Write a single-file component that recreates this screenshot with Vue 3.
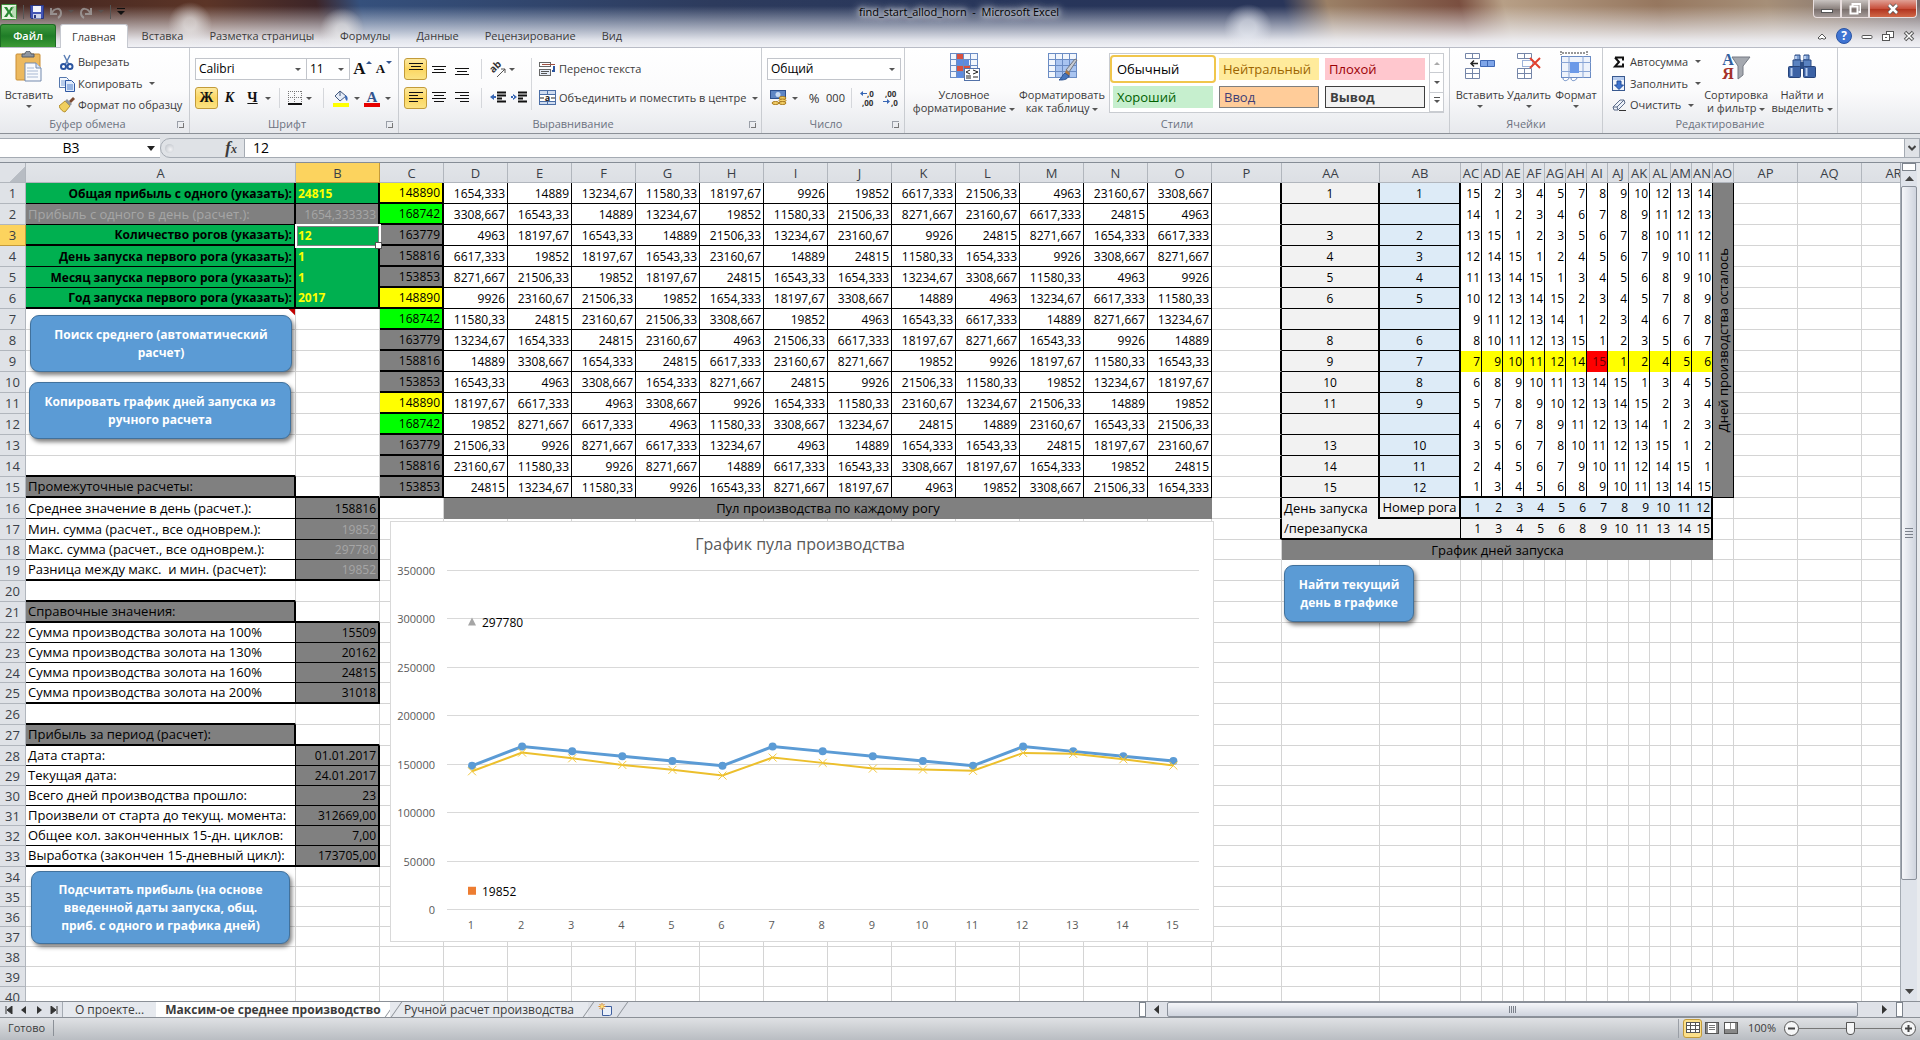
<script setup>
import { ref } from 'vue'

const columns = [
  { name: 'A', w: 270 }, { name: 'B', w: 84 }, { name: 'C', w: 64 },
  ...'DEFGHIJKLMNO'.split('').map((name) => ({ name, w: 64 })),
  { name: 'P', w: 70 }, { name: 'AA', w: 98 }, { name: 'AB', w: 81 },
  ...['AC', 'AD', 'AE', 'AF', 'AG', 'AH', 'AI', 'AJ', 'AK', 'AL', 'AM', 'AN', 'AO'].map((name) => ({ name, w: 21 })),
  { name: 'AP', w: 64 }, { name: 'AQ', w: 64 }, { name: 'AR', w: 64 },
]
const tableWidth = 26 + columns.reduce((sum, c) => sum + c.w, 0)
const shortRows = [18, 22, 23, 24, 28, 29, 30, 31, 32, 34, 35, 36, 37, 38, 39, 40]

const cells = {}
const covered = new Set()
const put = (key, t, c = '', extra = {}) => { cells[key] = { t, c, ...extra } }

// Input block
const inputs = [
  [1, 'Общая прибыль с одного (указать):', '24815'],
  [3, 'Количество рогов (указать):', '12'],
  [4, 'День запуска первого рога (указать):', '1'],
  [5, 'Месяц запуска первого рога (указать):', '1'],
  [6, 'Год запуска первого рога (указать):', '2017'],
]
for (const [r, label, value] of inputs) {
  put('A' + r, label, 'green bold right kb kr2')
  put('B' + r, value, 'green bold lemon kr2' + (r === 1 || r === 3 ? ' kb' : r === 6 ? ' kb2' : ' nb'))
}
cells.A6.c += ' kb2'
cells.A3.c += ' kb2'
put('A2', 'Прибыль с одного в день (расчет.):', 'grey faint text kb kr2')
put('B2', '1654,333333', 'grey faint right kb kr2')
put('A7', '', 'note')

// Summary blocks
const heading = (r, text) => {
  put('A' + (r - 1), '', 'kb2')
  put('A' + r, text, 'grey text kb2 kr2')
  put('B' + r, '', 'kb2')
}
const block = (from, items) => items.forEach(([label, value, faint], i) => {
  const last = i === items.length - 1 ? 'kb2' : 'kb'
  put('A' + (from + i), label, `text kr ${last}`)
  put('B' + (from + i), value, `grey right kr2 ${last}` + (faint ? ' faint' : ''))
})
heading(15, 'Промежуточные расчеты:')
block(16, [
  ['Среднее значение в день (расчет.):', '158816'],
  ['Мин. сумма (расчет., все одноврем.):', '19852', true],
  ['Макс. сумма (расчет., все одноврем.):', '297780', true],
  ['Разница между макс.  и мин. (расчет):', '19852', true],
])
heading(21, 'Справочные значения:')
block(22, [
  ['Сумма производства золота на 100%', '15509'],
  ['Сумма производства золота на 130%', '20162'],
  ['Сумма производства золота на 160%', '24815'],
  ['Сумма производства золота на 200%', '31018'],
])
heading(27, 'Прибыль за период (расчет):')
block(28, [
  ['Дата старта:', '01.01.2017'],
  ['Текущая дата:', '24.01.2017'],
  ['Всего дней производства прошло:', '23'],
  ['Произвели от старта до текущ. момента:', '312669,00'],
  ['Общее кол. законченных 15-дн. циклов:', '7,00'],
  ['Выработка (закончен 15-дневный цикл):', '173705,00'],
])

// Production pool
const dailyTotals = [148890, 168742, 163779, 158816, 153853]
const totalFill = ['yellow', 'lime', 'grey', 'grey', 'grey']
const poolStart = [1, 9, 8, 7, 11, 6, 12, 4, 13, 3, 14, 2]
const poolValue = (k) => {
  const v = (24815 * k) / 15
  return (k % 3 === 0 ? String(Math.round(v)) : v.toFixed(v < 10000 ? 3 : 2)).replace('.', ',')
}
// Days left per horn
const daysStart = [15, 2, 3, 4, 5, 7, 8, 9, 10, 12, 13, 14]
const launchDays = [1, 3, 4, 5, 6, 8, 9, 10, 11, 13, 14, 15]
for (let r = 1; r <= 15; r++) {
  put('C' + r, String(dailyTotals[(r - 1) % 5]), `${totalFill[(r - 1) % 5]} right kb2 kr2`)
  for (let i = 0; i < 12; i++) {
    put(columns[3 + i].name + r, poolValue(((poolStart[i] + r - 2) % 15) + 1), 'right kb kr')
    const days = ((daysStart[i] - r + 15) % 15) + 1
    let fill = ''
    if (r === 9) fill = days === 15 ? ' red' : ' yellow'
    put(columns[18 + i].name + r, String(days), 'right days kr' + (r === 15 ? ' kb2' : ' nb') + fill)
  }
  const horn = launchDays.indexOf(r)
  put('AA' + r, horn < 0 ? '' : String(r), 'pale center kb kr2')
  put('AB' + r, horn < 0 ? '' : String(horn + 1), 'sky center kb kr2')
  if (r > 1) covered.add('AO' + r)
  put('P' + r, '', 'kr2')
}
put('P16', '', 'kr2')
put('P17', '', 'kr2')
put('AO1', 'Дней производства осталось', 'grey upright kb kr', { rows: 15 })
put('D16', 'Пул производства по каждому рогу', 'grey center text nb nr', { cols: 12 })
columns.slice(4, 15).forEach((c) => covered.add(c.name + 16))
put('AA16', 'День запуска', 'pale text nb kr2')
put('AB16', 'Номер рога', 'pale center text kb2 kr2')
put('AA17', '/перезапуска', 'pale text nr kb2')
put('AB17', '', 'pale kb2 kr')
for (let i = 0; i < 12; i++) {
  const edge = i === 11 ? ' kr2' : ' nr'
  put(columns[18 + i].name + 16, String(i + 1), 'sky right days kb2' + edge)
  put(columns[18 + i].name + 17, String(launchDays[i]), 'pale right days kb2' + edge)
}
put('AA18', 'График дней запуска', 'grey center text nb nr', { cols: 14 })
columns.slice(17, 30).forEach((c) => covered.add(c.name + 18))

const rows = Array.from({ length: 40 }, (_, i) => {
  const r = i + 1
  return {
    r,
    cells: columns.filter((c) => !covered.has(c.name + r)).map((c) => ({ key: c.name + r, t: '', c: '', ...cells[c.name + r] })),
  }
})

// Chart
const px = (i) => 82 + i * 50.1
const py = (v) => 389 - (v * 339) / 350000
const blue = Array.from({ length: 15 }, (_, i) => dailyTotals[i % 5])
const gold = [143200, 162500, 156600, 149800, 144700, 138800, 157400, 151900, 146000, 145000, 143700, 162200, 161200, 155600, 149100]
const line = (data) => data.map((v, i) => `${px(i)},${py(v)}`).join(' ')
const ticks = [350000, 300000, 250000, 200000, 150000, 100000, 50000, 0]

const ribbonTabs = ['Вставка', 'Разметка страницы', 'Формулы', 'Данные', 'Рецензирование', 'Вид']
const nameBox = ref('B3')
const formula = ref('12')
const zoom = ref(50)
</script>

<template>
  <div class="app">
    <header class="title">
      <div class="quick">
        <svg width="16" height="16" viewBox="0 0 16 16"><rect x="0.5" y="0.5" width="15" height="15" rx="1" fill="#e9f5e4" stroke="#3c8d3a" /><path d="M3 3h3l2 3.500 2-3.500h3l-3.500 5 3.500 5h-3l-2-3.500-2 3.500h-3l3.500-5z" fill="#2b8a35" /><path d="M12 2v12M14 2v12" stroke="#8cc58a" /></svg>
        <i class="vbar"></i>
        <button class="flat" aria-label="Сохранить"><svg width="14" height="14" viewBox="0 0 14 14"><path d="M0.500 0.500h13v13h-12l-1-1z" fill="#4355b5" stroke="#2a3780" /><rect x="3" y="1" width="8" height="6" fill="#f3f5fb" /><rect x="3" y="9" width="8" height="4.500" fill="#cdd3ea" /><rect x="4" y="10" width="2" height="3" fill="#2a3780" /></svg></button>
        <svg class="dim" width="24" height="14" viewBox="0 0 24 14"><path d="M1 3v6h6M2 8c2-5 9-6 9 0 0 2-1 4-3 5" fill="none" stroke="#aaa" stroke-width="2" /><path d="M18 5h6l-3 3z" fill="#555" /></svg>
        <svg class="dim" width="24" height="14" viewBox="0 0 24 14"><path d="M11 3v6h-6M10 8c-2-5-9-6-9 0 0 2 1 4 3 5" fill="none" stroke="#aaa" stroke-width="2" /><path d="M18 5h6l-3 3z" fill="#555" /></svg>
        <i class="vbar"></i>
        <svg width="8" height="8" viewBox="0 0 8 8"><path d="M0 0h8v1h-8zM0 3h8l-4 4z" fill="#111" /></svg>
      </div>
      <h1>find_start_allod_horn&nbsp; -&nbsp; Microsoft Excel</h1>
      <div class="winbtns">
        <button aria-label="Свернуть"><svg width="12" height="12" viewBox="0 0 12 12"><rect x="0.500" y="6.500" width="11" height="3" fill="#fff" stroke="#555" /></svg></button>
        <button aria-label="Развернуть"><svg width="12" height="12" viewBox="0 0 12 12"><path d="M3.500 3V1h8v8h-2" fill="none" stroke="#fff" stroke-width="2" /><rect x="1.500" y="3.500" width="7" height="7" fill="none" stroke="#fff" stroke-width="2" /></svg></button>
        <button class="close" aria-label="Закрыть"><svg width="12" height="12" viewBox="0 0 12 12"><path d="M2 2l8 8M10 2l-8 8" stroke="#555" stroke-width="4" /><path d="M2 2l8 8M10 2l-8 8" stroke="#fff" stroke-width="2.500" /></svg></button>
      </div>
    </header>

    <nav class="tabs">
      <button class="file">Файл</button>
      <button class="tab active">Главная</button>
      <button v-for="t in ribbonTabs" :key="t" class="tab">{{ t }}</button>
      <div class="docbtns">
        <svg width="10" height="8" viewBox="0 0 10 8"><path d="M1 6l4-4 4 4-1 1h-2l-1-1-1 1h-2z" fill="#fff" stroke="#555" /></svg>
        <svg width="16" height="16" viewBox="0 0 16 16"><circle cx="8" cy="8" r="7.500" fill="#3f74d2" stroke="#2a55a5" /><text x="8" y="12" text-anchor="middle" font-size="12" font-weight="700" fill="#fff">?</text></svg>
        <svg width="12" height="12" viewBox="0 0 12 12"><rect x="1" y="5.500" width="10" height="3" rx="1" fill="#fff" stroke="#555" /></svg>
        <svg width="12" height="12" viewBox="0 0 12 12"><rect x="4.500" y="1.500" width="7" height="6" fill="#fff" stroke="#555" /><rect x="0.500" y="4.500" width="7" height="6" fill="#fff" stroke="#555" /><rect x="3" y="7" width="2" height="1" fill="#555" /></svg>
        <svg width="12" height="12" viewBox="0 0 12 12"><path d="M2 2l8 8M10 2l-8 8" stroke="#555" stroke-width="3.500" /><path d="M2.500 2.500l7 7M9.500 2.500l-7 7" stroke="#fff" stroke-width="1.500" /></svg>
      </div>
    </nav>

    <div class="ribbon">
      <section class="group clip">
        <div class="body">
          <button class="big">
            <svg width="28" height="32" viewBox="0 0 28 32"><rect x="1" y="3" width="24" height="26" rx="1" fill="#ecb95f" stroke="#c98e36" /><path d="M7 6V3h3c0-4 6-4 6 0h3v3z" fill="#8e959f" stroke="#555d68" /><path d="M10 12h11l5 5v13h-16z" fill="#f8fafd" stroke="#7389ad" /><path d="M21 12v5h5" fill="#dce5f3" stroke="#7389ad" /><path d="M12 17h7M12 20h11M12 23h11M12 26h11" stroke="#a7b8d3" /></svg>
            <span>Вставить</span><i class="car"></i>
          </button>
          <div class="stack">
            <button class="row"><svg width="16" height="16" viewBox="0 0 16 16"><path d="M5 1l5 10M11 1l-5 10" stroke="#5b7fb5" stroke-width="1.500" /><circle cx="4.500" cy="12.500" r="2.500" fill="none" stroke="#2b55a0" stroke-width="2" /><circle cx="11" cy="12.500" r="2.500" fill="none" stroke="#2b55a0" stroke-width="2" /></svg>Вырезать</button>
            <button class="row"><svg width="16" height="16" viewBox="0 0 16 16"><path d="M0.500 1.500h7l2 2v8h-9z" fill="#f4f8fd" stroke="#5577ad" /><path d="M2 5h5M2 7h5M2 9h5" stroke="#7ea2d8" /><path d="M6.500 4.500h6l3 3v8h-9z" fill="#dfeafa" stroke="#2f58a3" /><path d="M8 9h6M8 11h6M8 13h6" stroke="#4f7fca" /></svg>Копировать<i class="car"></i></button>
            <button class="row"><svg width="16" height="16" viewBox="0 0 16 16"><path d="M0 9l6-5 5 5-5 6c-2 0-5-3-6-6z" fill="#f0cf5e" stroke="#b5902c" /><path d="M6 4l2-2 5 5-2 2z" fill="#8f959c" /><path d="M10 4l4-4 2 2-4 4z" fill="#7b4a30" /></svg>Формат по образцу</button>
          </div>
        </div>
        <footer>Буфер обмена<i class="launch"></i></footer>
      </section>

      <section class="group font">
        <div class="body col">
          <div class="line">
            <label class="sel w112"><select aria-label="Шрифт"><option>Calibri</option></select><i class="car"></i></label>
            <label class="sel w43"><select aria-label="Размер"><option>11</option></select><i class="car"></i></label>
            <button class="sm serif big-a">A<i class="tip"></i></button>
            <button class="sm serif small-a">A<i class="tip down"></i></button>
          </div>
          <div class="line">
            <button class="sm serif on">Ж</button>
            <button class="sm serif"><i>К</i></button>
            <button class="sm serif"><u>Ч</u></button><i class="car"></i>
            <i class="sep"></i>
            <svg width="14" height="14" viewBox="0 0 14 14"><path d="M0 0.500h14M0 6.500h14M0.500 0v14M6.500 0v14M13.500 0v14" stroke="#777" stroke-dasharray="1 1" /><path d="M0 13h14" stroke="#111" stroke-width="2" /></svg><i class="car"></i>
            <i class="sep"></i>
            <svg width="18" height="18" viewBox="0 0 18 18"><path d="M3 7l5-5 6 5-6 5z" fill="#e5ecf7" stroke="#44597e" /><path d="M8 2v5" stroke="#44597e" /><path d="M13 6c3 1 3 4 2 6-2-1-2-4-2-6" fill="#3867b5" /><rect x="1" y="14" width="16" height="4" fill="#ffff00" /></svg><i class="car"></i>
            <svg width="18" height="18" viewBox="0 0 18 18"><text x="9" y="13" text-anchor="middle" font-size="15" font-weight="700" fill="#33558f" class="serif">A</text><rect x="1" y="14" width="16" height="4" fill="#e60000" /></svg><i class="car"></i>
          </div>
        </div>
        <footer>Шрифт<i class="launch"></i></footer>
      </section>

      <section class="group align">
        <div class="body">
          <div class="col">
            <div class="line">
              <button class="sm on"><svg width="14" height="14" viewBox="0 0 14 14"><path d="M0 1.500h14M2 4.500h10M0 7.500h14" stroke="#111" /></svg></button>
              <button class="sm"><svg width="14" height="14" viewBox="0 0 14 14"><path d="M0 4.500h14M2 7.500h10M0 10.500h14" stroke="#111" /></svg></button>
              <button class="sm"><svg width="14" height="14" viewBox="0 0 14 14"><path d="M0 6.500h14M2 9.500h10M0 12.500h14" stroke="#111" /></svg></button>
              <i class="sep"></i>
              <svg width="16" height="16" viewBox="0 0 16 16"><text x="1" y="11" transform="rotate(-45 4 9)" font-size="10" font-weight="700" fill="#333">ab</text><path d="M7 16l8-8M15 12V8h-4" fill="none" stroke="#555" /></svg><i class="car"></i>
            </div>
            <div class="line">
              <button class="sm on"><svg width="14" height="14" viewBox="0 0 14 14"><path d="M0 1.500h14M0 4.500h9M0 7.500h14M0 10.500h9" stroke="#111" /></svg></button>
              <button class="sm"><svg width="14" height="14" viewBox="0 0 14 14"><path d="M0 1.500h14M2 4.500h10M0 7.500h14M2 10.500h10" stroke="#111" /></svg></button>
              <button class="sm"><svg width="14" height="14" viewBox="0 0 14 14"><path d="M0 1.500h14M5 4.500h9M0 7.500h14M5 10.500h9" stroke="#111" /></svg></button>
              <i class="sep"></i>
              <svg width="16" height="14" viewBox="0 0 16 14"><path d="M7 1.500h9M7 4.500h9M7 7.500h5M7 10.500h9" stroke="#111" stroke-width="2" /><path d="M0 6l4-3v6zM3 5h3v2h-3z" fill="#3867b5" /></svg>
              <svg class="ml" width="16" height="14" viewBox="0 0 16 14"><path d="M7 1.500h9M7 4.500h9M7 7.500h5M7 10.500h9" stroke="#111" stroke-width="2" /><path d="M6 6l-4-3v6zM0 5h3v2h-3z" fill="#3867b5" /></svg>
            </div>
          </div>
          <i class="tall"></i>
          <div class="col">
            <div class="line"><button class="row"><svg width="17" height="16" viewBox="0 0 17 16"><rect x="0.500" y="1.500" width="11" height="4" fill="#fff" stroke="#666" /><path d="M3 3.500h13" stroke="#a05040" /><rect x="0.500" y="8.500" width="11" height="6" fill="#e5ecf7" stroke="#666" /><path d="M2 10.500h8M2 12.500h6" stroke="#555" /><path d="M15 5v5h-2" fill="none" stroke="#2b55a0" stroke-width="2" /></svg>Перенос текста</button></div>
            <div class="line"><button class="row"><svg width="17" height="16" viewBox="0 0 17 16"><rect x="0.500" y="0.500" width="16" height="14" fill="#cfdcf0" stroke="#4b6ea5" /><path d="M0 4.500h17M0 11.500h17M8.500 0v4M8.500 12v3" stroke="#4b6ea5" /><rect x="1" y="5" width="15" height="6" fill="#fff" /><text x="8.500" y="11" text-anchor="middle" font-size="9" font-weight="700" fill="#222">a</text><path d="M1 8h4M12 8h4" stroke="#222" /></svg>Объединить и поместить в центре<i class="car"></i></button></div>
          </div>
        </div>
        <footer>Выравнивание<i class="launch"></i></footer>
      </section>

      <section class="group number">
        <div class="body col">
          <div class="line"><label class="sel w134"><select aria-label="Формат"><option>Общий</option></select><i class="car"></i></label></div>
          <div class="line">
            <svg class="coins" width="17" height="16" viewBox="0 0 17 16"><rect x="0.500" y="0.500" width="15" height="8" fill="#5f86c4" stroke="#2d4f8d" /><circle cx="8" cy="4.500" r="2.500" fill="#c7d9f3" /><ellipse cx="12.500" cy="8" rx="3.500" ry="1.500" fill="#f3cf68" stroke="#a97a1d" /><ellipse cx="12.500" cy="10.500" rx="3.500" ry="1.500" fill="#f3cf68" stroke="#a97a1d" /><ellipse cx="12.500" cy="13" rx="3.500" ry="1.500" fill="#f3cf68" stroke="#a97a1d" /><ellipse cx="5.500" cy="13" rx="3.500" ry="1.500" fill="#f3cf68" stroke="#a97a1d" /></svg><i class="car"></i>
            <button class="sm pct">%</button>
            <button class="sm zeros">000</button>
            <i class="sep"></i>
            <svg width="18" height="18" viewBox="0 0 18 18" font-size="8" font-weight="700" fill="#333"><text x="7" y="8">,0</text><text x="2" y="17">,00</text><path d="M0 4.500l3-2.500v5zM3 4h4v1h-4z" fill="#3867b5" /></svg>
            <svg class="ml" width="18" height="18" viewBox="0 0 18 18" font-size="8" font-weight="700" fill="#333"><text x="2" y="8">,00</text><text x="8" y="17">,0</text><path d="M7 12.500l-3-2.500v5zM0 12h4v1h-4z" fill="#3867b5" /></svg>
          </div>
        </div>
        <footer>Число<i class="launch"></i></footer>
      </section>

      <section class="group styles">
        <div class="body">
          <button class="big cond">
            <svg width="32" height="32" viewBox="0 0 32 32"><rect x="2.500" y="2.500" width="27" height="24" fill="#f2f6fc" stroke="#6b8cc4" /><rect x="9" y="3" width="7" height="6" fill="#d9503f" /><rect x="9" y="9" width="12" height="6" fill="#5d8be0" /><rect x="9" y="15" width="14" height="6" fill="#d9503f" /><rect x="9" y="21" width="7" height="6" fill="#5d8be0" /><path d="M2 8.500h28M2 14.500h28M2 20.500h28M8.500 2v25M15.500 2v25M22.500 2v25" stroke="#6b8cc4" /><rect x="16.500" y="17.500" width="15" height="12" fill="#fff" stroke="#5271a8" /><path d="M22 19l-4 2 4 2M18 25h5M18 27h5M25 19l5 2-5 2M25 26h5" fill="none" stroke="#222" /></svg>
            <span>Условное</span><span>форматирование <i class="car"></i></span>
          </button>
          <button class="big fmt">
            <svg width="32" height="32" viewBox="0 0 32 32"><rect x="2.500" y="2.500" width="28" height="24" fill="#f2f6fc" stroke="#6b8cc4" /><rect x="9" y="9" width="21" height="17" fill="#a9c4f0" /><path d="M2 8.500h28M2 14.500h28M2 20.500h28M9.500 2v25M16.500 2v25M23.500 2v25" stroke="#6b8cc4" /><path d="M31 9l-8 12-3-2 9-11z" fill="#c9ccd2" stroke="#6f7580" /><path d="M20 19l4 3-1 3-4-3z" fill="#b07840" /><path d="M19 22l4 3c-2 4-6 4-10 4 3-2 3-5 6-7z" fill="#4776bd" stroke="#2c5290" /></svg>
            <span>Форматировать</span><span>как таблицу <i class="car"></i></span>
          </button>
          <div class="gallery">
            <div class="swatches">
              <button class="st chosen">Обычный</button><button class="st neutral">Нейтральный</button><button class="st bad">Плохой</button>
              <button class="st good">Хороший</button><button class="st entry">Ввод</button><button class="st output">Вывод</button>
            </div>
            <div class="spin"><span class="off"><i class="car up"></i></span><span><i class="car"></i></span><span class="more"><i class="car"></i></span></div>
          </div>
        </div>
        <footer class="st-foot">Стили</footer>
      </section>

      <section class="group cellsg">
        <div class="body">
          <button class="big c1"><svg width="32" height="32" viewBox="0 0 32 32"><path d="M1.500 2.500h14v5h-14zM8.500 2v6M1.500 17.500h14v10h-14zM8.500 17v11M1 22.500h15" fill="#fff" stroke="#7485a8" /><path d="M16.500 9.500h14v6h-14zM23.500 9v7" fill="#7ea5e8" stroke="#3f68b5" /><path d="M7 12.500h7M10 9.500l-3 3 3 3" fill="none" stroke="#222" stroke-width="1.500" /></svg><span>Вставить</span><i class="car"></i></button>
          <button class="big c2"><svg width="32" height="32" viewBox="0 0 32 32"><path d="M4.500 2.500h14v5h-14zM11.500 2v6M4.500 17.500h14v10h-14zM11.500 17v11M4 22.500h15" fill="#fff" stroke="#7485a8" /><path d="M9.500 9.500h10v6h-10z" fill="none" stroke="#3f68b5" stroke-dasharray="1 1" /><path d="M17 7l10 10M27 7l-10 10" stroke="#e0402f" stroke-width="2" /></svg><span>Удалить</span><i class="car"></i></button>
          <button class="big c3"><svg width="32" height="32" viewBox="0 0 32 32"><path d="M1 0v4M27 0v4M2 2h24" stroke="#333" stroke-dasharray="2 1" /><rect x="1.500" y="5.500" width="29" height="21" fill="#eef3fb" stroke="#6b8cc4" /><path d="M9 5v22M23 5v22M1 11.500h30M1 20.500h30" stroke="#8aa6d6" /><rect x="10" y="11" width="9" height="11" fill="#6c9ae8" /><path d="M3 27c0 4 5 3 6 0M11 27c0 4 5 3 6 0" fill="#fff" stroke="#6b8cc4" /></svg><span>Формат</span><i class="car"></i></button>
        </div>
        <footer>Ячейки</footer>
      </section>

      <section class="group edit">
        <div class="body">
          <div class="stack">
            <button class="row"><svg width="14" height="16" viewBox="0 0 14 16"><path d="M3 3.500h8v3M3 3.500l4 4.500-4 4.500h8v-3" fill="none" stroke="#111" stroke-width="2" /></svg>Автосумма<i class="car"></i></button>
            <button class="row"><svg width="14" height="16" viewBox="0 0 14 16"><rect x="0.500" y="0.500" width="12" height="14" fill="#f2f6fc" stroke="#39598f" /><rect x="1" y="1" width="11" height="3" fill="#b8cdef" /><path d="M5 5h4v4h2.500l-4.500 4.500-4.500-4.500H5z" fill="#3d73cf" stroke="#254f9a" /></svg>Заполнить<i class="car"></i></button>
            <button class="row"><svg width="14" height="16" viewBox="0 0 14 16"><path d="M1 10l7-7h4l1 3-7 7h-4z" fill="#eef2f9" stroke="#5c6c8a" /><path d="M1 10h4l1 3M5 10l7-7" fill="none" stroke="#5c6c8a" /><path d="M7 13.500h7" stroke="#333" /></svg>Очистить<i class="car"></i></button>
          </div>
          <button class="big e1"><svg width="32" height="32" viewBox="0 0 32 32"><path d="M12 6h18l-7 9v9l-5 4v-13z" fill="#a5a9b0" stroke="#767b84" /><text x="8" y="14" text-anchor="middle" font-size="16" font-weight="700" fill="#33609f" class="serif">А</text><text x="8" y="28" text-anchor="middle" font-size="16" font-weight="700" fill="#a5312a" class="serif">Я</text></svg><span>Сортировка</span><span>и фильтр <i class="car"></i></span></button>
          <button class="big e2"><svg width="32" height="32" viewBox="0 0 32 32"><path d="M9 4h5v5h-5zM18 4h5v5h-5z" fill="#7d9fd2" stroke="#2f4f87" /><path d="M7 9h8v7h-8zM17 9h8v7h-8z" fill="#5a82c0" stroke="#2f4f87" /><rect x="14" y="11" width="4" height="7" fill="#2f4f87" /><rect x="2.500" y="15.500" width="12" height="11" rx="1" fill="#3c62a5" stroke="#27447a" /><rect x="17.500" y="15.500" width="12" height="11" rx="1" fill="#3c62a5" stroke="#27447a" /><path d="M5.500 17v8M20.500 17v8M10 5v3M19 5v3" stroke="#b7cdf0" stroke-width="2" /></svg><span>Найти и</span><span>выделить <i class="car"></i></span></button>
        </div>
        <footer>Редактирование</footer>
      </section>
      <div class="rest"></div>
    </div>

    <div class="fbar">
      <input v-model="nameBox" class="namebox" aria-label="Имя ячейки" />
      <span class="nbcar"><svg width="8" height="5" viewBox="0 0 8 5"><path d="M0 0h8l-4 5z" fill="#222" /></svg></span>
      <div class="fx"><i class="knob"></i><span class="serif">f<small>x</small></span></div>
      <input v-model="formula" class="formula" aria-label="Строка формул" />
      <button class="expand" aria-label="Развернуть строку формул"><svg width="8" height="6" viewBox="0 0 8 6"><path d="M0.500 1l3.500 3.500L7.500 1" fill="none" stroke="#444" stroke-width="2" /></svg></button>
    </div>

    <main class="sheetwrap">
      <div class="sheet">
        <table :style="{ width: tableWidth + 'px' }">
          <colgroup><col class="rowcol" /><col v-for="c in columns" :key="c.name" :style="{ width: c.w + 'px' }" /></colgroup>
          <thead>
            <tr><th class="corner"></th><th v-for="c in columns" :key="c.name" :class="{ hot: c.name === 'B' }">{{ c.name }}</th></tr>
          </thead>
          <tbody>
            <tr v-for="row in rows" :key="row.r" :class="{ short: shortRows.includes(row.r) }">
              <th :class="{ hot: row.r === 3 }">{{ row.r }}</th>
              <td v-for="cell in row.cells" :key="cell.key" :class="cell.c" :colspan="cell.cols" :rowspan="cell.rows"><span v-if="cell.rows" class="turn">{{ cell.t }}</span><template v-else>{{ cell.t }}</template></td>
            </tr>
          </tbody>
        </table>
        <div class="cursor"></div>
        <button class="shape s1">Поиск среднего (автоматический расчет)</button>
        <button class="shape s2">Копировать график дней запуска из ручного расчета</button>
        <button class="shape s3">Подсчитать прибыль (на основе введенной даты запуска, общ. приб. с одного и графика дней)</button>
        <button class="shape s4">Найти текущий день в графике</button>
        <svg class="chart" width="824" height="421" viewBox="0 0 824 421">
          <rect x="0.500" y="0.500" width="823" height="420" fill="#fff" stroke="#d9d9d9" />
          <text x="410" y="29" text-anchor="middle" class="ctitle">График пула производства</text>
          <g v-for="v in ticks" :key="v">
            <path :d="`M57 ${Math.round(py(v)) - 0.5}H809`" stroke="#d9d9d9" />
            <text x="45" :y="Math.round(py(v)) + 4" text-anchor="end" class="tick">{{ v }}</text>
          </g>
          <text v-for="i in 15" :key="i" :x="px(i - 1) - 1" y="408" text-anchor="middle" class="tick">{{ i }}</text>
          <polyline :points="line(blue)" fill="none" stroke="#5b9bd5" stroke-width="3" />
          <circle v-for="(v, i) in blue" :key="'b' + i" :cx="px(i)" :cy="py(v)" r="4" fill="#5b9bd5" />
          <polyline :points="line(gold)" fill="none" stroke="#ecbf2c" stroke-width="2" />
          <path v-for="(v, i) in gold" :key="'g' + i" :d="`M${px(i) - 4} ${py(v) - 4}l8 8m0 -8l-8 8`" stroke="#f3c93f" />
          <path :d="`M${px(0)} ${py(297780) - 4}l4 8h-8z`" fill="#a5a5a5" />
          <rect :x="px(0) - 4" :y="py(19852) - 4" width="8" height="8" fill="#ed7d31" />
          <text x="92" :y="py(297780) + 5" class="dlabel">297780</text>
          <text x="92" :y="py(19852) + 5" class="dlabel">19852</text>
        </svg>
      </div>
      <div class="vscroll">
        <i class="split"></i>
        <svg width="9" height="5" viewBox="0 0 9 5"><path d="M0 5h9L4.500 0z" fill="#444" /></svg>
        <div class="track"><div class="thumb"><i></i><i></i><i></i><i></i></div></div>
        <svg width="9" height="5" viewBox="0 0 9 5"><path d="M0 0h9L4.500 5z" fill="#444" /></svg>
      </div>
    </main>

    <div class="bottom">
      <div class="navs">
        <svg width="8" height="8" viewBox="0 0 8 8"><path d="M1 0v8M7 0v8L2 4z" stroke="#333" fill="#333" stroke-width="1" /></svg>
        <svg width="8" height="8" viewBox="0 0 8 8"><path d="M6 0v8L1 4z" fill="#333" /></svg>
        <svg width="8" height="8" viewBox="0 0 8 8"><path d="M2 0v8l5-4z" fill="#333" /></svg>
        <svg width="8" height="8" viewBox="0 0 8 8"><path d="M7 0v8M1 0v8l5-4z" stroke="#333" fill="#333" stroke-width="1" /></svg>
      </div>
      <button class="stab t1">О проекте...</button>
      <button class="stab t2">Максим-ое среднее производство</button>
      <button class="stab t3">Ручной расчет производства</button>
      <button class="stab t4" aria-label="Вставить лист"><svg width="15" height="13" viewBox="0 0 15 13"><path d="M4.500 3.500h9v8l-2 1h-7z" fill="#eaf0fa" stroke="#3f5f9f" /><path d="M4 0v7M0.500 3.500h7M1.500 1l5 5M6.500 1l-5 5" stroke="#e08a1e" /><circle cx="4" cy="3.500" r="1.500" fill="#ffe27a" /></svg></button>
      <div class="hgap"></div>
      <i class="hsplit"></i>
      <svg class="ha" width="5" height="9" viewBox="0 0 5 9"><path d="M5 0v9L0 4.500z" fill="#333" /></svg>
      <div class="hthumb"><i></i><i></i><i></i><i></i></div>
      <svg class="hb" width="5" height="9" viewBox="0 0 5 9"><path d="M0 0v9l5-4.500z" fill="#333" /></svg>
      <i class="hsplit"></i>
      <div class="hend"></div>
    </div>

    <div class="status">
      <span class="ready">Готово</span>
      <div class="views">
        <button class="view on" aria-label="Обычный"><svg width="14" height="12" viewBox="0 0 14 12"><rect x="0.500" y="0.500" width="13" height="10" fill="#fff" stroke="#555" /><path d="M0 3.500h14M0 7.500h14M4.500 0v11M9.500 0v11" stroke="#555" /></svg></button>
        <button class="view" aria-label="Разметка страницы"><svg width="14" height="12" viewBox="0 0 14 12"><rect x="0.500" y="0.500" width="13" height="11" fill="#888" stroke="#555" /><rect x="3" y="1" width="8" height="10" fill="#fff" /><path d="M4 3.500h6M4 5.500h6M4 7.500h6" stroke="#777" /></svg></button>
        <button class="view" aria-label="Страничный режим"><svg width="14" height="12" viewBox="0 0 14 12"><rect x="0.500" y="0.500" width="13" height="11" fill="#888" stroke="#555" /><path d="M1 1h5v6h-5zM7 1h4v6h-4z" fill="#fff" /></svg></button>
      </div>
      <label for="zoom">100%</label>
      <button class="round" aria-label="Уменьшить"><svg width="9" height="9" viewBox="0 0 9 9"><path d="M1 4.500h7" stroke="#444" stroke-width="2" /></svg></button>
      <input id="zoom" v-model="zoom" type="range" min="0" max="100" />
      <button class="round" aria-label="Увеличить"><svg width="9" height="9" viewBox="0 0 9 9"><path d="M1 4.500h7M4.500 1v7" stroke="#444" stroke-width="2" /></svg></button>
    </div>
  </div>
</template>

<style>
body { margin: 0; overflow: hidden; }
</style>

<style scoped>
* { box-sizing: border-box; }
.app { display: flex; flex-direction: column; height: 100vh; font: 11px/16px "Open Sans", "Noto Sans", sans-serif; color: #3b3b3b; background: radial-gradient(circle at 190px 24px, rgba(240, 240, 240, .6) 6px, transparent 22px), radial-gradient(circle at 342px 30px, rgba(240, 240, 240, .6) 6px, transparent 22px), radial-gradient(circle at 65% 28px, rgba(235, 238, 245, .6) 8px, transparent 24px), linear-gradient(180deg, transparent 0, transparent 6px, rgba(236, 238, 244, .5) 24px, rgba(240, 241, 246, .92) 40px, #f2f3f7 48px), linear-gradient(75deg, #cfcccc 0, #a89a99 5%, #402522 9%, #4a2a22 16%, #5c3527 22%, #3d2528 27%, #35507c 29%, #2d3b5d 45%, #27355a 60%, #293559 71%, #9b8066 73%, #7a4f40 79%, #b79f86 81%, #96775f 88%, #a68f78 93%, #74686a 100%); }
button { font: inherit; color: inherit; background: none; border: 0; padding: 0; margin: 0; white-space: nowrap; }
svg { display: block; flex: none; }
.serif { font-family: "Liberation Serif", serif; }

.title { display: flex; align-items: flex-start; height: 24px; flex: none; }
.quick { display: flex; align-items: center; gap: 6px; flex: 1 1 0; height: 24px; padding-left: 1px; }
.vbar { width: 1px; height: 14px; background: #555; }
.dim { opacity: .7; }
h1 { margin: 4px 0 0; font: inherit; font-size: 11px; color: #000; text-shadow: 0 0 5px #fff, 0 0 8px #fff, 0 0 12px #fff; }
.winbtns { flex: 1 1 0; display: flex; justify-content: flex-end; padding-right: 3px; }
.winbtns button { display: grid; place-items: center; width: 28px; height: 18px; border: 1px solid #e8dede; border-top: 0; background: linear-gradient(#c9c3c0, #8d8480 50%, #776c69 51%, #a49a98); }
.winbtns button:first-child { border-radius: 0 0 0 4px; }
.winbtns .close { width: 48px; border-radius: 0 0 4px 0; background: linear-gradient(#e0a095, #c8503c 50%, #b0301c 51%, #d06848); }

.tabs { display: flex; height: 24px; align-items: flex-end; border-bottom: 1px solid #b9bcc6; flex: none; }
.tab, .file { height: 23px; padding: 0 13px; }
.tab.active { height: 24px; margin: 0 1px -1px 4px; padding: 0 11px; background: #fff; border: 1px solid #c6c9d0; border-bottom: 0; border-radius: 3px 3px 0 0; }
.file { width: 56px; padding: 0; color: #fff; font-weight: 600; background: linear-gradient(#3f9a3f, #1f7d27 50%, #3d9a35); border: 1px solid #1c6b22; border-bottom: 0; border-radius: 3px 3px 0 0; }
.docbtns { display: flex; align-items: center; gap: 9px; margin-left: auto; height: 23px; padding-right: 5px; }

.ribbon { display: flex; height: 86px; background: linear-gradient(#fff, #fbfbfc 50%, #e7e9ed); border-bottom: 1px solid #8b9097; flex: none; }
.group { display: flex; flex-direction: column; flex: none; border-right: 1px solid #c9ccd1; padding: 0 5px; }
.rest { flex: 1; }
.group .body { display: flex; flex: 1; min-height: 0; }
.group footer { position: relative; height: 17px; line-height: 16px; text-align: center; color: #6b7280; padding-right: 14px; }
.launch { position: absolute; right: 0; top: 5px; width: 7px; height: 7px; border: solid #9a9fa8; border-width: 1px 0 0 1px; }
.launch::after { content: ""; position: absolute; right: 0; bottom: 0; width: 4px; height: 4px; border: solid #777; border-width: 0 1px 1px 0; }
.clip { width: 190px; } .font { width: 209px; } .align { width: 363px; } .number { width: 143px; } .styles { width: 545px; } .cellsg { width: 153px; } .edit { width: 235px; }
.group.cellsg footer, .group.edit footer { padding-right: 0; }
.car { display: inline-block; flex: none; width: 0; height: 0; border: 3px solid transparent; border-top-color: #555; border-bottom-width: 0; vertical-align: middle; }
.car.up { border-top-width: 0; border-bottom: 3px solid #aaa; }
.big { display: flex; flex-direction: column; align-items: center; flex: none; line-height: 13px; padding-top: 3px; }
.big span { display: block; }
.big svg { margin-bottom: 5px; }
.big > .car { margin-top: 4px; }
.clip .big { width: 48px; margin-right: 6px; }
.stack { display: flex; flex-direction: column; padding-top: 3px; }
.row { display: flex; align-items: center; gap: 3px; height: 22px; }
.row .car { margin-left: 3px; }
.body.col, .col { display: flex; flex-direction: column; }
.col .line { display: flex; align-items: center; height: 22px; margin-top: 7px; }
.col .line:first-child { margin-top: 10px; }
.sel { position: relative; display: block; flex: none; height: 22px; border: 1px solid #c2c5cb; background: #fff; }
.sel + .sel { margin-left: -1px; }
.sel select { appearance: none; width: 100%; height: 20px; border: 0; padding: 0 3px; background: none; font: inherit; font-size: 12px; color: #000; }
.sel .car { position: absolute; right: 5px; top: 9px; pointer-events: none; }
.w112 { width: 112px; } .w43 { width: 44px; } .w134 { width: 134px; }
.sm { display: grid; place-items: center; flex: none; width: 23px; height: 22px; color: #333; }
.sm.serif { position: relative; display: block; font-weight: 700; font-size: 14px; color: #111; }
.sm.on { background: linear-gradient(#fde9a0, #fbd662 50%, #fbe383); border: 1px solid #c29b3a; border-radius: 3px; }
.tip { position: absolute; right: 0; top: 3px; width: 0; height: 0; border: 3px solid transparent; border-top-width: 0; border-bottom-color: #33558f; }
.tip.down { border-top: 3px solid #33558f; border-bottom-width: 0; }
.sm.serif.big-a { font-size: 17px; width: 22px; padding-right: 3px; } .sm.serif.small-a { font-size: 13px; width: 20px; padding-right: 3px; }
.sep { flex: none; width: 1px; height: 20px; margin: 0 8px; background: #d5d7db; }
.ml { margin-left: 5px; }
.font .line > svg + .car { margin: 0 3px 0 4px; }
.font .line > .sm + .car { margin-left: 1px; }
.tall { flex: none; width: 1px; height: 52px; margin: 10px 7px 0 4px; background: #d5d7db; }
.align .line > svg + .car { margin-left: 3px; }
.align .body .col:first-child { width: 123px; flex: none; }
.number .coins { margin-left: 3px; }
.number .coins + .car { margin: 0 6px 0 5px; }
.number .sep { margin: 0 8px 0 4px; }
.pct { font-size: 13px; width: 20px; }
.cond { width: 104px; margin-left: 2px; } .fmt { width: 92px; }
.gallery { display: flex; margin: 5px 0 0 1px; width: 335px; height: 60px; border: 1px solid #c9ccd1; background: #fff; }
.swatches { display: grid; grid-template-columns: repeat(3, 100px); grid-auto-rows: 22px; gap: 6px; padding: 4px 3px; flex: 1; }
.st { text-align: left; padding-left: 4px; font-size: 13px; }
.chosen { color: #000; outline: 2px solid #f0c64c; outline-offset: 1px; border-radius: 1px; }
.neutral { background: #ffeb9c; color: #9c6500; } .bad { background: #ffc7ce; color: #9c0006; } .good { background: #c6efce; color: #006100; }
.entry { background: #ffcc99; color: #3f3f76; border: 1px solid #7f7f7f; } .output { background: #f2f2f2; color: #3f3f3f; border: 1px solid #3f3f3f; font-weight: 700; }
.spin { display: flex; flex-direction: column; width: 14px; }
.spin span { display: grid; place-items: center; flex: 1; border-left: 1px solid #c9ccd1; border-bottom: 1px solid #c9ccd1; }
.spin .more .car { position: relative; }
.spin .more .car::before { content: ""; position: absolute; left: -3px; top: -6px; width: 6px; height: 1px; background: #555; }
.group .st-foot { padding-right: 0; }
.c1 { width: 50px; } .c2 { width: 48px; } .c3 { width: 46px; }
.edit .body { padding-left: 4px; }
.edit .stack { width: 90px; }
.edit .row { gap: 4px; }
.e1 { width: 70px; } .e2 { width: 62px; }

.fbar { display: flex; height: 29px; padding: 4px 0; background: #dfe2e6; flex: none; border-bottom: 1px solid #868d96; }
.fbar input { border: solid #a5abb3; border-width: 1px 0; background: #fff; color: #000; font: inherit; font-size: 14px; outline: 0; }
.namebox { width: 142px; text-align: center; }
.nbcar { display: grid; place-items: center; width: 18px; background: #fff; border: solid #a5abb3; border-width: 1px 0; }
.fx { display: flex; align-items: center; justify-content: space-between; width: 85px; padding: 0 7px 0 4px; border: 1px solid #a5abb3; border-radius: 10px 0 0 10px; font-size: 17px; font-style: italic; font-weight: 700; background: #dfe2e6; }
.fx small { font-size: 12px; }
.knob { width: 9px; height: 9px; border-radius: 50%; background: radial-gradient(circle at 60% 60%, #f2f3f5, #b8bdc4); }
.formula { flex: 1; padding: 0 8px; }
.expand { display: grid; place-items: center; width: 16px; border: 1px solid #a5abb3; }

.sheetwrap { display: flex; flex: 1 1 0; min-height: 0; }
.sheet { position: relative; flex: 1; min-width: 0; overflow: hidden; background: #fff; }
table { table-layout: fixed; border-collapse: separate; border-spacing: 0; color: #000; font-size: 12px; line-height: 17px; }
.rowcol { width: 26px; }
th { height: 21px; padding: 0; font-weight: 400; font-size: 13px; line-height: 18px; color: #3a3f47; background: #dfe2e7; border: solid #b1b6bd; border-width: 0 1px 1px 0; overflow: hidden; white-space: nowrap; }
thead th { height: 20px; background: linear-gradient(#e2e5e9, #dcdfe4); }
th.hot { background: #fcd35e; border-color: #c49a3a; }
.corner { background: linear-gradient(135deg, #dfe2e7 65%, #b7bcc3 66%); }
td { height: 21px; padding: 0 2px; border: solid #d4d4d4; border-width: 0 1px 1px 0; overflow: hidden; white-space: pre; }
.short th, .short td { height: 20px; }
.text { font-size: 13px; }
.right { text-align: right; } .center { text-align: center; } .bold { font-weight: 700; }
.green { background: #00b050; } .grey { background: #808080; } .yellow { background: #ff0; } .lime { background: #0f0; } .red { background: #f00; color: #600; }
.pale { background: #f2f2f2; } .sky { background: #ddebf7; }
.lemon { color: #ff0; } .faint { color: #a6a6a6; }
.kb { border-bottom-color: #000; } .kr { border-right-color: #000; }
.kb2 { border-bottom: 2px solid #000; } .kr2 { border-right: 2px solid #000; }
.nb { border-bottom-width: 0; } .nr { border-right-width: 0; }
.days { padding: 0 1px; }
.note { background: linear-gradient(225deg, #c00000 4px, transparent 5px); }
.upright { padding: 0; }
.turn { display: block; margin: auto; writing-mode: vertical-rl; transform: rotate(180deg); font-size: 13px; line-height: 19px; text-align: center; }
.cursor { position: absolute; left: 295px; top: 61px; width: 86px; height: 24px; border: 2px solid #fff; outline: 1px solid #808080; outline-offset: -3px; }
.cursor::after { content: ""; position: absolute; right: -3px; bottom: -3px; width: 5px; height: 5px; background: #fff; border: 1px solid #555; }
.shape { position: absolute; white-space: normal; color: #fff; font-weight: 700; font-size: 12px; line-height: 18px; background: #5b9bd5; border: 1px solid #41719c; border-radius: 9px; box-shadow: 2px 3px 4px rgba(0, 0, 0, .5); padding: 0 14px; }
.s1 { left: 30px; top: 152px; width: 262px; height: 57px; }
.s2 { left: 29px; top: 219px; width: 262px; height: 57px; }
.s3 { left: 31px; top: 708px; width: 259px; height: 73px; padding: 0 20px; }
.s4 { left: 1284px; top: 402px; width: 130px; height: 57px; padding: 0 12px; }
.chart { position: absolute; left: 390px; top: 358px; }
.ctitle { font-size: 16px; fill: #595959; }
.tick { font-size: 11px; fill: #595959; }
.dlabel { font-size: 12px; fill: #000; }

.vscroll { display: flex; flex-direction: column; align-items: center; gap: 5px; width: 20px; padding-bottom: 7px; background: #dfe3ea; border-left: 1px solid #a5abb3; border-right: 3px solid #e9ebee; }
.split { width: 14px; height: 8px; border: 1px solid #7d848d; background: #fff; }
.track { flex: 1; width: 100%; }
.thumb { display: flex; flex-direction: column; gap: 2px; align-items: center; justify-content: center; height: 87%; border: 1px solid #8b919b; border-radius: 2px; background: linear-gradient(90deg, #f5f6f9, #cfd4de); }
.thumb i { width: 8px; height: 1px; background: #7b818b; }

.bottom { display: flex; align-items: center; height: 17px; font-size: 12px; background: #dfe2e8; border-top: 1px solid #8b9097; border-bottom: 1px solid #8b9097; flex: none; }
.navs { display: flex; align-items: center; gap: 7px; width: 62px; padding-left: 5px; }
.stab { position: relative; height: 15px; line-height: 15px; }
.t1 { width: 94px; border-left: 1px solid #a5abb3; background: #e6e9ee; }
.t2 { width: 234px; background: #fff; font-weight: 700; }
.t3 { width: 198px; background: #e6e9ee; }
.t4 { display: grid; place-items: center; width: 34px; }
.t2::after, .t3::after, .t3::before, .t4::after { content: ""; position: absolute; top: 0; right: -1px; width: 1px; height: 15px; background: #8b9097; transform: skewX(-35deg); }
.t3::before { right: auto; left: 6px; }
.hgap { flex: 1; }
.hsplit { width: 7px; height: 15px; border: 1px solid #7d848d; background: #fff; }
.ha { margin: 0 8px 0 8px; } .hb { margin: 0 9px 0 24px; }
.hthumb { display: flex; gap: 1px; align-items: center; justify-content: center; width: 36%; height: 15px; border: 1px solid #8b919b; border-radius: 2px; background: linear-gradient(#f5f6f9, #cfd4de); }
.hthumb i { width: 1px; height: 7px; background: #7b818b; }
.hend { width: 17px; }
.status { display: flex; align-items: center; height: 22px; padding: 0 4px 2px 8px; background: linear-gradient(#dfe1e4, #b9bdc2); flex: none; }
.ready { width: 46px; border-right: 1px solid #8b9097; }
.views { display: flex; align-items: center; margin-left: auto; border-left: 1px solid #9a9fa6; padding-left: 4px; margin-right: 8px; }
.view { display: grid; place-items: center; width: 19px; height: 19px; }
.view.on { background: #fce08a; border: 1px solid #c29b3a; border-radius: 3px; }
.round { display: grid; place-items: center; width: 15px; height: 15px; border: 1px solid #555; border-radius: 50%; background: #f5f6f7; }
.status label { margin-right: 8px; }
.status input { appearance: none; width: 102px; height: 16px; margin: 0; background: linear-gradient(#777, #777) center / 100% 1px no-repeat; }
.status input::-webkit-slider-thumb { appearance: none; width: 9px; height: 13px; border: 1px solid #555; border-radius: 1px 1px 5px 5px; background: #f5f6f7; }
</style>
